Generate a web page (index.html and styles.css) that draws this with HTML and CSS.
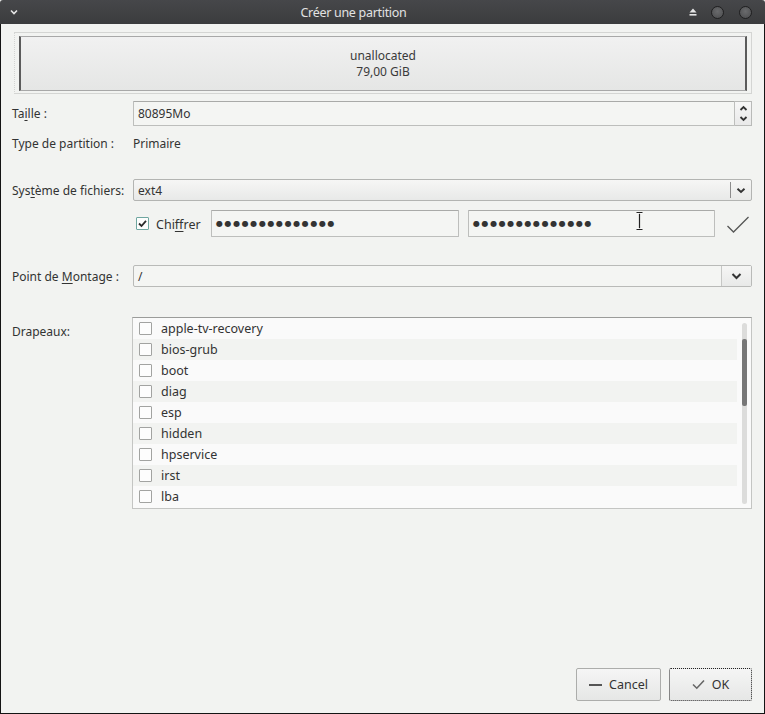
FILE: index.html
```html
<!DOCTYPE html>
<html lang="fr">
<head>
<meta charset="utf-8">
<title>Créer une partition</title>
<link rel="stylesheet" href="styles.css">
</head>
<body>
<div class="window">
  <div class="titlebar">
    <svg class="tb-menu" width="10" height="8" viewBox="0 0 10 8"><path d="M2 2.5 L5 5.5 L8 2.5" fill="none" stroke="#e6e6e6" stroke-width="1.6"/></svg>
    <div class="tb-title">Créer une partition</div>
    <div class="tb-buttons">
      <svg width="10" height="10" viewBox="0 0 10 10"><path d="M1.5 5.5 L5 1.5 L8.5 5.5 Z" fill="#e6e6e6"/><rect x="1.5" y="7" width="7" height="1.6" fill="#e6e6e6"/></svg>
      <span class="tb-circle"></span>
      <span class="tb-circle"></span>
    </div>
  </div>
  <div class="body">
    <div class="part-frame">
      <div class="part-box">
        <div>unallocated</div>
        <div>79,00 GiB</div>
      </div>
    </div>

    <div class="row row-size">
      <div class="label">Ta<u>i</u>lle :</div>
      <div class="field spin">
        <div class="input spin-input">80895Mo</div>
        <div class="spin-btns">
          <svg width="9" height="7" viewBox="0 0 9 7"><path d="M1.5 5 L4.5 2 L7.5 5" fill="none" stroke="#333" stroke-width="1.8"/></svg>
          <svg width="9" height="7" viewBox="0 0 9 7"><path d="M1.5 2 L4.5 5 L7.5 2" fill="none" stroke="#333" stroke-width="1.8"/></svg>
        </div>
      </div>
    </div>

    <div class="row row-type">
      <div class="label">Type de partition :</div>
      <div class="field">Primaire</div>
    </div>

    <div class="row row-fs">
      <div class="label">Sys<u>t</u>ème de fichiers:</div>
      <div class="field combo">
        <div class="combo-text">ext4</div>
        <div class="combo-arrow small">
          <svg width="10" height="7" viewBox="0 0 10 7"><path d="M1.5 1.8 L5 5 L8.5 1.8" fill="none" stroke="#333" stroke-width="1.9"/></svg>
        </div>
      </div>
    </div>

    <div class="row row-crypt">
      <div class="label"></div>
      <div class="field crypt">
        <span class="check checked">
          <svg width="11" height="11" viewBox="0 0 11 11"><path d="M2 5.5 L4.5 8 L9 2.8" fill="none" stroke="#2a2a2a" stroke-width="1.8"/></svg>
        </span>
        <span class="crypt-label">Chi<u>f</u>frer</span>
        <div class="input pw pw1"><span class="dots">●●●●●●●●●●●●●●</span></div>
        <div class="input pw pw2"><span class="dots">●●●●●●●●●●●●●●</span>
          <svg class="ibeam" width="7" height="18" viewBox="0 0 7 18"><path d="M0.5 0.5 H6.5 M0.5 17.5 H6.5 M3.5 0.5 V17.5" fill="none" stroke="#222" stroke-width="1.2"/><path d="M1 1.5 H6 M1 16.5 H6" stroke="#fff" stroke-width="0.8"/></svg>
        </div>
        <svg class="ok-tick" width="24" height="20" viewBox="0 0 24 20"><path d="M1.5 11 L7.5 17 L22.5 2" fill="none" stroke="#555" stroke-width="1.3"/></svg>
      </div>
    </div>

    <div class="row row-mount">
      <div class="label">Point de <u>M</u>ontage :</div>
      <div class="field combo editable">
        <div class="combo-text">/</div>
        <div class="combo-arrow big">
          <svg width="11" height="8" viewBox="0 0 11 8"><path d="M1.5 2 L5.5 6 L9.5 2" fill="none" stroke="#333" stroke-width="2"/></svg>
        </div>
      </div>
    </div>

    <div class="row row-flags">
      <div class="label flags-label">Drapeaux:</div>
      <div class="field list">
        <div class="list-items">
          <div class="item"><span class="check"></span>apple-tv-recovery</div>
          <div class="item alt"><span class="check"></span>bios-grub</div>
          <div class="item"><span class="check"></span>boot</div>
          <div class="item alt"><span class="check"></span>diag</div>
          <div class="item"><span class="check"></span>esp</div>
          <div class="item alt"><span class="check"></span>hidden</div>
          <div class="item"><span class="check"></span>hpservice</div>
          <div class="item alt"><span class="check"></span>irst</div>
          <div class="item"><span class="check"></span>lba</div>
        </div>
        <div class="scrollbar"><div class="thumb"></div></div>
      </div>
    </div>

    <div class="buttons">
      <button class="btn btn-cancel">
        <svg width="13" height="4" viewBox="0 0 13 4"><rect x="0" y="1" width="13" height="2" fill="#555"/></svg>
        Cancel
      </button>
      <button class="btn btn-ok">
        <svg width="13" height="11" viewBox="0 0 13 11"><path d="M1 5.5 L4.8 9.2 L12 1.5" fill="none" stroke="#666" stroke-width="1.6"/></svg>
        OK
      </button>
    </div>
  </div>
</div>
</body>
</html>
```

FILE: styles.css
```css
html, body {
  margin: 0;
  padding: 0;
  background: #f2f3f1;
}
body {
  font-family: "Noto Sans", "DejaVu Sans", sans-serif;
  font-size: 12px;
  color: #333;
}
u {
  text-decoration-thickness: 1px;
  text-underline-offset: 2px;
}
.window {
  width: 765px;
  height: 714px;
  display: flex;
  flex-direction: column;
  background: #f2f3f1;
}
.titlebar {
  height: 24px;
  flex: none;
  background: linear-gradient(#46474a, #3b3c3e);
  border-radius: 3px 3px 0 0;
  display: flex;
  align-items: center;
  color: #e2e2e2;
}
.tb-menu {
  margin-left: 9px;
  flex: none;
}
.tb-title {
  flex: 1;
  text-align: center;
  font-size: 12.5px;
  letter-spacing: -0.3px;
}
.tb-buttons {
  margin-right: 13px;
  display: flex;
  align-items: center;
  gap: 15px;
  flex: none;
}
.tb-buttons svg {
  margin-right: -2px;
}
.tb-circle {
  width: 11px;
  height: 11px;
  border-radius: 50%;
  background: radial-gradient(circle at 50% 40%, #6a6b6d, #4a4b4d);
  border: 1px solid #1f1f20;
}
.body {
  flex: 1;
  display: flex;
  flex-direction: column;
  border: 1px solid #141414;
  border-top: none;
  padding: 8px 12px 12px 11px;
}
.part-frame {
  margin-left: 2px;
  height: 62px;
  box-sizing: border-box;
  border: 1px solid #d4d5d3;
  border-left-style: dotted;
  padding: 3px 4px 2px 4px;
}
.part-box {
  height: 100%;
  box-sizing: border-box;
  border-top: 1px solid #a8a8a8;
  border-bottom: 1px solid #a8a8a8;
  border-left: 2px solid #5b5b5b;
  border-right: 2px solid #5b5b5b;
  background: linear-gradient(#f1f1f1, #e5e6e5);
  display: flex;
  flex-direction: column;
  align-items: center;
  justify-content: center;
  line-height: 16px;
  padding-top: 1px;
  color: #3a3a3a;
}
.row {
  display: flex;
  align-items: center;
}
.label {
  width: 121px;
  flex: none;
  white-space: nowrap;
}
.field {
  flex: 1;
  min-width: 0;
}
.input {
  box-sizing: border-box;
  border: 1px solid #bdbebc;
  border-top-color: #a9aaa8;
  background: #f4f5f3;
  border-radius: 1px;
  display: flex;
  align-items: center;
  padding-left: 4px;
}
.row-size {
  margin-top: 7px;
  height: 25px;
}
.spin {
  display: flex;
  height: 25px;
}
.spin-input {
  flex: 1;
  height: 25px;
}
.spin-btns {
  width: 17px;
  height: 25px;
  box-sizing: border-box;
  border: 1px solid #b9bab8;
  border-left: none;
  background: linear-gradient(#f7f7f7, #e9e9e9);
  display: flex;
  flex-direction: column;
  align-items: center;
  justify-content: space-around;
  padding: 1px 0;
}
.row-type {
  margin-top: 8px;
  height: 18px;
}
.row-fs {
  margin-top: 27px;
  height: 22px;
}
.combo {
  height: 22px;
  box-sizing: border-box;
  border: 1px solid #b3b4b2;
  border-radius: 2px;
  background: linear-gradient(#f6f6f5, #e8e9e8);
  display: flex;
  align-items: center;
}
.combo-text {
  flex: 1;
  padding-left: 4px;
}
.combo-arrow {
  height: 100%;
  display: flex;
  align-items: center;
  justify-content: center;
  box-sizing: border-box;
}
.combo-arrow.small {
  width: 21px;
  border-left: 1px solid #8c8c8c;
  height: 16px;
}
.combo.editable {
  background: #f4f5f3;
  border-color: #b9bab8;
}
.combo-arrow.big {
  width: 30px;
  border-left: 1px solid #c6c7c5;
  background: linear-gradient(#f6f6f5, #e8e9e8);
}
.row-crypt {
  margin-top: 9px;
  height: 27px;
}
.crypt {
  display: flex;
  align-items: center;
  height: 27px;
}
.check {
  width: 13px;
  height: 13px;
  box-sizing: border-box;
  border: 1px solid #a2a3a1;
  border-radius: 1px;
  background: #fdfdfd;
  display: inline-flex;
  align-items: center;
  justify-content: center;
  flex: none;
}
.check.checked {
  border-color: #6fa6a0;
  margin-left: 3px;
}
.crypt-label {
  margin-left: 7px;
  width: 55px;
  font-size: 12.5px;
  padding-top: 1px;
}
.pw {
  height: 27px;
  position: relative;
  padding-left: 4px;
}
.pw1 {
  width: 248px;
}
.pw2 {
  width: 247px;
  margin-left: 9px;
}
.dots {
  font-family: "DejaVu Sans", sans-serif;
  font-size: 8px;
  letter-spacing: 1.6px;
  color: #333;
  line-height: 1;
}
.ibeam {
  position: absolute;
  left: 167px;
  top: 1px;
}
.ok-tick {
  margin-left: 11px;
  margin-top: 2px;
}
.row-mount {
  margin-top: 28px;
  height: 22px;
}
.row-flags {
  margin-top: 30px;
  height: 192px;
  align-items: stretch;
}
.flags-label {
  padding-top: 6px;
}
.list {
  margin-left: -1px;
  box-sizing: border-box;
  border: 1px solid #c4c5c3;
  border-top-color: #9b9c9a;
  background: #fafafa;
  display: flex;
  overflow: hidden;
}
.list-items {
  flex: 1;
}
.item {
  height: 21px;
  display: flex;
  align-items: center;
  padding-left: 6px;
  gap: 9px;
  font-size: 12.5px;
  color: #333;
}
.item.alt {
  background: #f2f3f1;
}
.scrollbar {
  width: 14px;
  flex: none;
  display: flex;
  justify-content: flex-start;
  padding: 5px 0 4px 5px;
  box-sizing: border-box;
  position: relative;
}
.scrollbar::before {
  content: "";
  width: 5px;
  height: 100%;
  background: #dcdcdb;
  border-radius: 3px;
  display: block;
}
.thumb {
  position: absolute;
  left: 5px;
  top: 21px;
  width: 5px;
  height: 67px;
  background: #777;
  border-radius: 2px;
}
.buttons {
  margin-top: auto;
  display: flex;
  justify-content: flex-end;
  gap: 8px;
}
.btn {
  height: 33px;
  box-sizing: border-box;
  border: 1px solid #acadab;
  border-radius: 2px;
  background: linear-gradient(#f5f5f5, #e6e7e6);
  font-family: "Noto Sans", "DejaVu Sans", sans-serif;
  font-size: 12.5px;
  color: #333;
  display: flex;
  align-items: center;
  justify-content: center;
  gap: 7px;
  padding: 0;
}
.btn-cancel {
  width: 85px;
}
.btn-ok {
  width: 83px;
  border: 1px dotted #222;
}
```
